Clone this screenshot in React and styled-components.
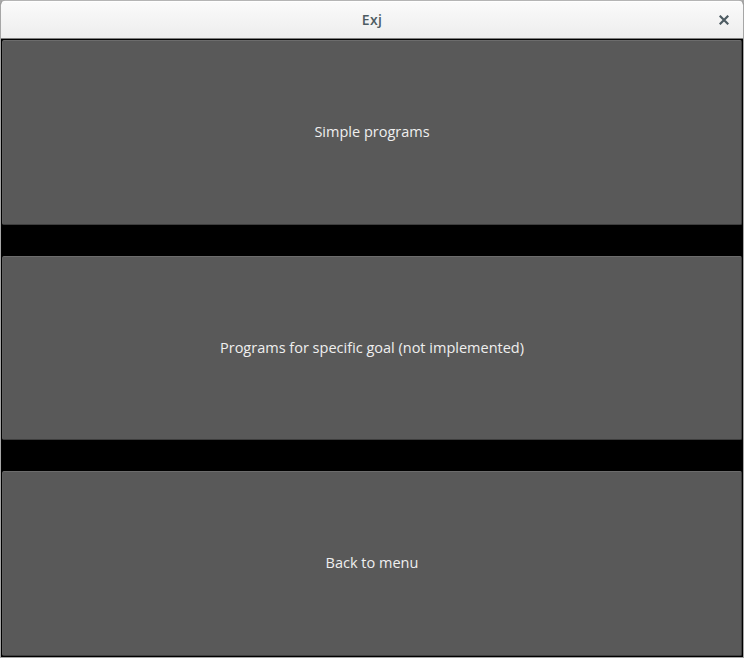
import React from "react";
import styled, { createGlobalStyle } from "styled-components";

const Global = createGlobalStyle`
  html, body { margin: 0; padding: 0; background: #a9a9a9; }
  body { width: 744px; height: 658px; overflow: hidden; }
`;

const Frame = styled.div`
  width: 744px;
  height: 658px;
  box-sizing: border-box;
  border: 1px solid #a6a6a6;
  border-top-color: #b5b5b5;
  border-radius: 5px 5px 0 0;
  display: flex;
  flex-direction: column;
  overflow: hidden;
  background: #000;
`;

const TitleBar = styled.div`
  height: 38px;
  flex: none;
  box-sizing: border-box;
  border-bottom: 1px solid #7e7e7e;
  background: linear-gradient(#fbfbfb, #ededed);
  box-shadow: inset 0 1px 0 #ffffff;
  display: grid;
  grid-template-columns: 1fr auto 1fr;
  align-items: center;
  font-family: "Open Sans", "DejaVu Sans", sans-serif;
`;

const Title = styled.div`
  grid-column: 2;
  font-size: 14px;
  font-weight: 600;
  color: #4d5b62;
  letter-spacing: 0.3px;
  padding-bottom: 1px;
`;

const CloseBtn = styled.div`
  grid-column: 3;
  justify-self: end;
  margin-right: 14px;
  width: 10px;
  height: 10px;
  display: flex;
`;

const Content = styled.div`
  flex: 1;
  display: flex;
  flex-direction: column;
  gap: 31px;
  padding: 1px;
  background: #000;
`;

const Button = styled.button`
  flex: 1;
  margin: 0;
  border: 1px solid #3e3e3e;
  border-top-color: #6c6c6c;
  border-left-color: #5f5f5f;
  border-radius: 2px;
  background: #595959;
  color: #efefef;
  font-family: "Open Sans", "DejaVu Sans", sans-serif;
  font-size: 14.5px;
  cursor: pointer;
  padding: 0 0 2px 0;
`;

export default function App() {
  return (
    <>
      <Global />
      <Frame>
        <TitleBar>
          <Title>Exj</Title>
          <CloseBtn>
            <svg width="10" height="10" viewBox="0 0 10 10">
              <path d="M1.5 1.5 L8.5 8.5 M8.5 1.5 L1.5 8.5" stroke="#4d5b62" strokeWidth="2.2" strokeLinecap="square" />
            </svg>
          </CloseBtn>
        </TitleBar>
        <Content>
          <Button>Simple programs</Button>
          <Button>Programs for specific goal (not implemented)</Button>
          <Button>Back to menu</Button>
        </Content>
      </Frame>
    </>
  );
}
